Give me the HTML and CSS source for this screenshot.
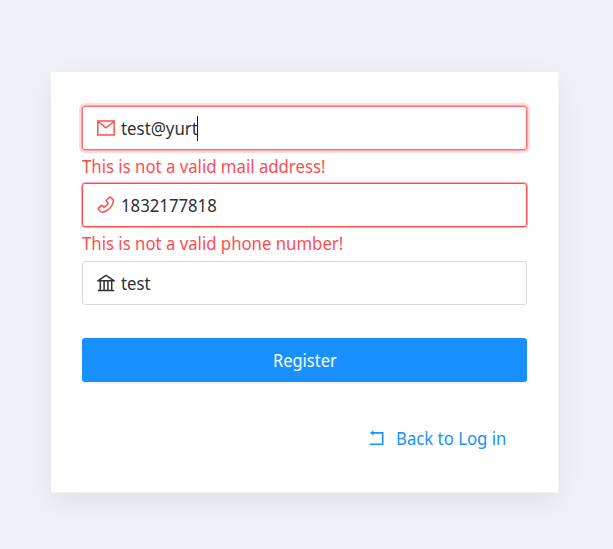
FILE: index.html
```
<!DOCTYPE html>
<html lang="en">
<head>
<meta charset="utf-8">
<title>Register</title>
<link rel="stylesheet" href="styles.css">
</head>
<body>
<main class="card">
  <form class="form">
    <div class="field field-error field-focus">
      <svg class="icon" viewBox="0 0 18 18"><path d="M.8 2.1h16.400v13.800H.8zM1 2.500l8 6.300 8-6.300"/></svg>
      <span class="text value-mail">test@yurt</span><i class="caret"></i>
    </div>
    <div class="message"><span class="text">This is not a valid mail address!</span></div>
    <div class="field field-error">
      <svg class="icon" viewBox="0 0 18 18"><path d="M12.4 1.3 9.500 4.200q-.5.6 0 1.200l1.700 1.800c-.8 2.100-2.100 3.400-4.100 4.100L5.300 9.600q-.6-.5-1.200 0l-2.500 2.500q-.5.6-.1 1.200l2.200 2.500q.6.6 1.600.5C10.800 15.700 15.800 10.600 16.400 5.200q.1-.9-.5-1.600L13.600 1.300q-.6-.5-1.200 0z"/></svg>
      <span class="text">1832177818</span>
    </div>
    <div class="message"><span class="text">This is not a valid phone number!</span></div>
    <div class="field field-last">
      <svg class="icon" viewBox="0 0 18 18"><path d="M1.200 6.700 9 1.300l7.800 5.400zM3.300 7v9M7.100 7v9M10.900 7v9M14.700 7v9M.8 16.500h16.400"/></svg>
      <span class="text">test</span>
    </div>
    <button class="submit" type="button"><span class="text submit-label">Register</span></button>
    <a class="back">
      <svg class="back-icon" viewBox="0 0 16 16"><path d="M3 2.900h10.700v11.300H.7"/><path class="arrow" d="M1 2.900 4.400.2v5.400z"/></svg>
      <span class="text">Back to Log in</span>
    </a>
  </form>
</main>
</body>
</html>
```
FILE: styles.css
```
* { box-sizing: border-box; }
body {
  margin: 0;
  height: 549px;
  padding: 72px 54px 0 51px;
  overflow: hidden;
  background: #eff1f6;
  font-family: "Noto Sans", "Open Sans", sans-serif;
  font-size: 18.5px;
  line-height: 24px;
  color: #303133;
}
.card {
  width: 508px;
  height: 421px;
  padding: 34px 31px 0;
  border: 1px solid #f1f2f3;
  border-width: 0 1px 1px 0;
  background: #fff;
  box-shadow: 0 9px 26px rgba(0, 0, 0, .065);
}
.form { display: flex; flex-direction: column; width: 445px; }
.field {
  display: flex;
  align-items: center;
  height: 44px;
  padding: 0 14px;
  border: 1px solid #d9d9d9;
  border-radius: 3px;
}
.field-error { border-color: #ff4d4f; box-shadow: 0 0 0 .5px #ff4d4f; }
.field-focus { border-color: #ff7072; box-shadow: 0 0 0 .5px #ff7072, 0 0 0 3px #ffdbdc; }
.field-last { margin-top: 1px; }
.icon {
  flex: none;
  width: 18px;
  height: 18px;
  margin-right: 6px;
  fill: none;
  stroke: #303133;
  stroke-width: 1.5;
}
.field-error .icon { stroke: #ff4d4f; }
.text { display: block; white-space: nowrap; transform: scaleX(.905); transform-origin: 0 50%; }
.value-mail { width: 76px; transform: scaleX(.91); }
.caret { width: 1px; height: 25px; background: #202020; }
.message { display: flex; align-items: center; height: 33px; padding-bottom: 2px; color: #ff4d4f; }
.submit {
  display: flex;
  justify-content: center;
  align-items: center;
  height: 44px;
  margin-top: 33px;
  padding: 0;
  border: 0;
  border-radius: 3px;
  background: #1890ff;
  color: #fff;
  font: inherit;
  box-shadow: 0 2px 0 rgba(0, 0, 0, .04);
}
.submit-label { transform: scaleX(.89); transform-origin: 50% 50%; }
.back {
  display: flex;
  align-items: center;
  height: 24px;
  margin: 44px 0 0 287px;
  color: #1890ff;
}
.back-icon { flex: none; width: 16px; height: 16px; margin-right: 11px; fill: none; stroke: currentColor; stroke-width: 1.6; }
.arrow { fill: currentColor; stroke: none; }
```
